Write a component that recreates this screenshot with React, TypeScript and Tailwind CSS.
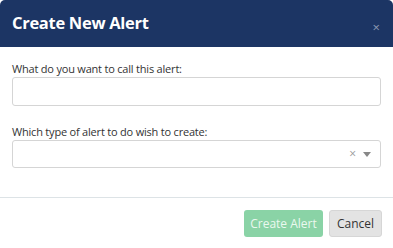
import { useState } from 'react';

export default function App() {
    const [name, setName] = useState('');

    return (
        <div className="h-[248px] w-[393px] overflow-hidden bg-white font-['Open_Sans',sans-serif] text-[#333]">
            <div className="flex h-[47px] items-center justify-between rounded-t-[5px] bg-[#1c3564] pl-3 pr-[13px]">
                <h1 className="text-[16.5px] font-bold tracking-[-0.3px] text-white">Create New Alert</h1>
                <button type="button" className="pt-[7px] text-[13px] leading-none text-[#8d99b2]">×</button>
            </div>

            <div className="px-3 pt-[14px]">
                <label className="block text-[11px] leading-[15px] tracking-[-0.2px]">What do you want to call this alert:</label>
                <input
                    value={name}
                    onChange={(e) => setName(e.target.value)}
                    className="mt-[1px] block h-[29px] w-full rounded-[3px] border border-[#d5d5d5] px-2 text-[12px] outline-none"
                />

                <label className="mt-[18px] block text-[11px] leading-[15px] tracking-[-0.2px]">Which type of alert to do wish to create:</label>
                <div className="mt-[1px] flex h-[28px] w-full items-center justify-end gap-[7px] rounded-[3px] border border-[#d5d5d5] pr-[9px]">
                    <span className="text-[12px] leading-none text-[#999]">×</span>
                    <svg width="8" height="5" viewBox="0 0 8 5">
                        <path d="M0 0h8L4 5z" fill="#888" />
                    </svg>
                </div>
            </div>

            <div className="mt-[29px] border-t border-[#dde3e6]" />

            <div className="flex justify-end gap-[6px] px-[11px] pt-[12px]">
                <button type="button" className="h-[27px] w-[79px] rounded-[3px] bg-[#8ad3a6] text-[12px] text-[#eaf8ef]">Create Alert</button>
                <button type="button" className="h-[27px] w-[53px] rounded-[3px] border border-[#d6d6d6] bg-[#e3e3e3] text-[12px] text-[#333]">Cancel</button>
            </div>
        </div>
    );
}
